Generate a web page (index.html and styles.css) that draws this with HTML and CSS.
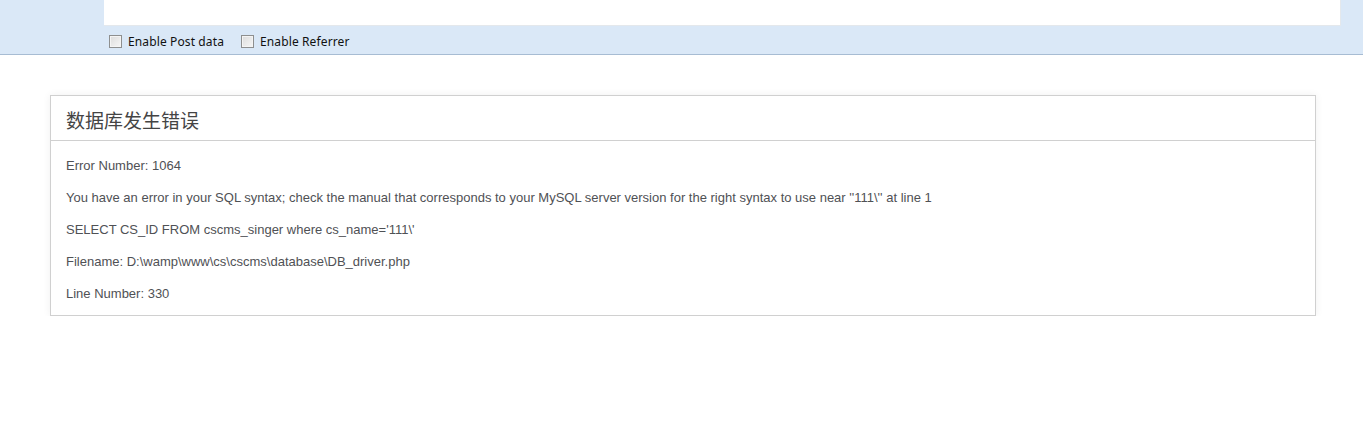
FILE: index.html
```html
<!DOCTYPE html>
<html>
<head>
<meta charset="utf-8">
<link rel="stylesheet" href="styles.css">
</head>
<body>
<div class="toolbar">
  <div class="url-box"></div>
  <div class="options">
    <label class="opt"><span class="cb"></span>Enable Post data</label>
    <label class="opt"><span class="cb"></span>Enable Referrer</label>
  </div>
</div>
<div id="container">
  <h1>数据库发生错误</h1>
  <p>Error Number: 1064</p>
  <p>You have an error in your SQL syntax; check the manual that corresponds to your MySQL server version for the right syntax to use near ''111\'' at line 1</p>
  <p>SELECT CS_ID FROM cscms_singer where cs_name='111\'</p>
  <p>Filename: D:\wamp\www\cs\cscms\database\DB_driver.php</p>
  <p>Line Number: 330</p>
</div>
</body>
</html>
```
FILE: styles.css
```css
html, body {
  margin: 0;
  padding: 0;
  background: #fff;
}
body {
  font-family: "Liberation Sans", Arial, "Noto Sans CJK SC", sans-serif;
  font-size: 13px;
  line-height: 20px;
  color: #4F5155;
}
.toolbar {
  background: #dae8f7;
  border-bottom: 1px solid #a7bcd3;
  height: 54px;
  padding-left: 104px;
  padding-right: 22px;
}
.url-box {
  height: 25px;
  background: #fff;
  border-bottom: 1px solid #e4e8ec;
  border-right: 1px solid #e4e8ec;
}
.options {
  display: flex;
  gap: 17px;
  padding-left: 5px;
  padding-top: 7px;
  font-family: "Noto Sans", "Open Sans", sans-serif;
  font-size: 12px;
  line-height: 17px;
  letter-spacing: 0.12px;
  color: #111;
}
.opt {
  display: flex;
  align-items: center;
  gap: 6px;
}
.cb {
  width: 11px;
  height: 11px;
  border: 1px solid #8e8f8f;
  background: linear-gradient(135deg, #dcdcdc, #f6f6f6);
  box-shadow: inset 0 0 0 1px #f4f4f4;
}
#container {
  margin: 40px 47px 0 50px;
  border: 1px solid #D0D0D0;
  box-shadow: 0 0 8px #f0f0f0;
}
h1 {
  color: #444;
  border-bottom: 1px solid #D0D0D0;
  font-size: 19px;
  font-weight: normal;
  line-height: 20px;
  margin: 0 0 15px 0;
  padding: 14px 15px 10px 15px;
  font-family: "Noto Sans CJK SC", sans-serif;
}
p {
  margin: 12px 15px;
}
p:last-child {
  margin-bottom: 11px;
}
```
